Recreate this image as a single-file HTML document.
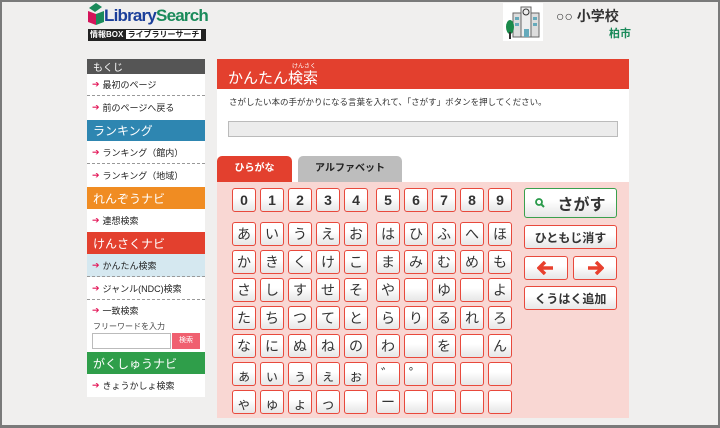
<!DOCTYPE html>
<html><head><meta charset="utf-8"><style>
*{margin:0;padding:0;box-sizing:border-box}
body{width:720px;height:428px;overflow:hidden;background:#f0efee;font-family:"Liberation Sans","Noto Sans CJK JP",sans-serif;position:relative;color:#222}
.frame{position:absolute;left:0;top:0;width:720px;height:428px;border:2px solid #7a7a7a;border-bottom-width:3px;pointer-events:none}
.a{position:absolute}
.side{left:87px;top:59px;width:118px;height:338px;background:#fff}
.hd{position:absolute;left:0;width:118px;color:#fff;font-size:12px;padding-left:6px;display:flex;align-items:center}
.it{position:absolute;left:0;width:118px;font-size:9px;padding-left:5px;display:flex;align-items:center;border-bottom:1px dashed #999}
.it:before{content:"➔";color:#e4195a;font-size:9px;margin-right:3px}
.key{position:absolute;width:24px;height:24px;border:1.5px solid #e8493c;border-radius:3px;background:linear-gradient(#fff 40%,#e6e6e6);font-size:14px;display:flex;align-items:center;justify-content:center;color:#333}
.key.sm{font-size:14px;padding-top:4px}
.btn{position:absolute;border:1.5px solid #e8493c;border-radius:3px;background:linear-gradient(#fff 40%,#e6e6e6);display:flex;align-items:center;justify-content:center;font-weight:bold;color:#333}
</style></head><body>
<div class="a" style="left:86px;top:3px;width:20px;height:24px">
<svg width="20" height="24"><polygon points="2,8 10,11 10,22 2,19" fill="#d4145a"/><polygon points="10,11 18,8 18,19 10,22" fill="#1a8a5a"/><polygon points="3,5 10,0 16,4 9,9" fill="#1a8a5a"/></svg></div>
<div class="a" style="left:104px;top:6px;font-size:17px;font-weight:bold;letter-spacing:-0.8px;color:#1b3f9a">Library<span style="color:#1a8a5a">Search</span></div>
<div class="a" style="left:88px;top:29px;width:118px;height:12px;background:#222;color:#fff;font-size:8px;font-weight:bold;line-height:12px;padding-left:2px">情報BOX <span style="background:#fff;color:#222;padding:0 2px">ライブラリーサーチ</span></div>
<div class="a" style="left:503px;top:3px;width:40px;height:38px;background:#fff">
<svg width="40" height="38"><rect x="10" y="10" width="26" height="24" fill="#ddd" stroke="#666"/><rect x="18" y="4" width="10" height="30" fill="#eee" stroke="#666"/><circle cx="23" cy="9" r="3" fill="none" stroke="#333"/><rect x="12" y="14" width="4" height="3" fill="#6ab"/><rect x="30" y="14" width="4" height="3" fill="#6ab"/><rect x="12" y="20" width="4" height="3" fill="#6ab"/><rect x="30" y="20" width="4" height="3" fill="#6ab"/><rect x="21" y="26" width="5" height="8" fill="#6ab"/><ellipse cx="7" cy="24" rx="4" ry="7" fill="#1a8a4a"/><rect x="6" y="29" width="2" height="7" fill="#333"/></svg></div>
<div class="a" style="left:556px;top:6px;font-size:14px;font-weight:bold;color:#333">○○ 小学校</div>
<div class="a" style="left:609px;top:25px;font-size:11px;font-weight:bold;color:#1a8a5a">柏市</div>
<div class="a side">
<div class="hd" style="top:0;height:15px;background:#555;font-size:10px">もくじ</div>
<div class="it" style="top:15px;height:22px">最初のページ</div>
<div class="it" style="top:37px;height:23px;border:0">前のページへ戻る</div>
<div class="hd" style="top:61px;height:21px;background:#2e86b1">ランキング</div>
<div class="it" style="top:82px;height:23px">ランキング（館内）</div>
<div class="it" style="top:105px;height:23px;border:0">ランキング（地域）</div>
<div class="hd" style="top:128px;height:22px;background:#f08c22">れんぞうナビ</div>
<div class="it" style="top:150px;height:23px;border:0">連想検索</div>
<div class="hd" style="top:173px;height:22px;background:#e3402e">けんさくナビ</div>
<div class="it" style="top:195px;height:23px;background:#d5e8f0">かんたん検索</div>
<div class="it" style="top:218px;height:23px">ジャンル(NDC)検索</div>
<div class="it" style="top:243px;height:16px;border:0">一致検索</div>
<div class="a" style="left:6px;top:262px;font-size:8px;color:#444">フリーワードを入力</div>
<div class="a" style="left:5px;top:274px;width:79px;height:16px;border:1px solid #bbb;background:#fff"></div>
<div class="a" style="left:85px;top:274px;width:28px;height:16px;background:#f06070;color:#fff;font-size:7px;text-align:center;line-height:16px">検索</div>
<div class="hd" style="top:293px;height:22px;background:#2f9e4a">がくしゅうナビ</div>
<div class="it" style="top:315px;height:23px;border:0">きょうかしょ検索</div>
</div>
<div class="a" style="left:217px;top:59px;width:412px;height:359px;background:#fff"></div>
<div class="a" style="left:217px;top:59px;width:412px;height:30px;background:#e3402e;color:#fff;font-size:15px;padding:8px 0 0 11px">かんたん<span style="position:relative">検索<span style="position:absolute;left:4px;top:-9px;font-size:6px;white-space:nowrap">けんさく</span></span></div>
<div class="a" style="left:229px;top:96px;font-size:8.5px;color:#333">さがしたい本の手がかりになる言葉を入れて、「さがす」ボタンを押してください。</div>
<div class="a" style="left:228px;top:121px;width:390px;height:16px;border:1px solid #bbb;background:#ececec"></div>
<div class="a" style="left:217px;top:156px;width:75px;height:27px;background:#e3402e;border-radius:5px 5px 0 0;color:#fff;font-size:10px;font-weight:bold;text-align:center;line-height:26px">ひらがな</div>
<div class="a" style="left:298px;top:156px;width:104px;height:27px;background:#bdbdbd;border-radius:5px 5px 0 0;color:#222;font-size:10px;font-weight:bold;text-align:center;line-height:26px">アルファベット</div>
<div class="a" style="left:217px;top:182px;width:412px;height:236px;background:#f9d7d3"></div>
<div id="keys"></div>
<div class="btn" style="left:524px;top:188px;width:93px;height:30px;border-color:#3aa04d;font-size:16px"><svg width="10" height="10" style="margin-right:12px"><circle cx="4" cy="4" r="3" fill="none" stroke="#2a9a4a" stroke-width="1.8"/><line x1="6" y1="6" x2="9" y2="9" stroke="#2a9a4a" stroke-width="2"/></svg>さがす</div>
<div class="btn" style="left:524px;top:225px;width:93px;height:24px;font-size:12px">ひともじ消す</div>
<div class="btn" style="left:524px;top:256px;width:44px;height:24px"><svg width="18" height="14"><path d="M2 7H16M8 1L2 7L8 13" fill="none" stroke="#e8402e" stroke-width="3.5"/></svg></div>
<div class="btn" style="left:573px;top:256px;width:44px;height:24px"><svg width="18" height="14"><path d="M2 7H16M10 1L16 7L10 13" fill="none" stroke="#e8402e" stroke-width="3.5"/></svg></div>
<div class="btn" style="left:524px;top:286px;width:93px;height:24px;font-size:12px">くうはく追加</div>
<script>
var rows=[["0","1","2","3","4","5","6","7","8","9"],["あ","い","う","え","お","は","ひ","ふ","へ","ほ"],["か","き","く","け","こ","ま","み","む","め","も"],["さ","し","す","せ","そ","や","","ゆ","","よ"],["た","ち","つ","て","と","ら","り","る","れ","ろ"],["な","に","ぬ","ね","の","わ","","を","","ん"],["ぁ","ぃ","ぅ","ぇ","ぉ","゛","゜","","",""],["ゃ","ゅ","ょ","っ","","ー","","","",""]];
var h="";
rows.forEach(function(r,i){var y=i==0?188:222+(i-1)*28;r.forEach(function(c,j){var x=(j<5?232:376)+(j%5)*28;var cl=(i>=6&&j<5)?"key sm":"key";var st=i==0?"font-weight:bold;":"";h+='<div class="'+cl+'" style="'+st+'left:'+x+'px;top:'+y+'px">'+c+'</div>';});});
document.getElementById("keys").innerHTML=h;
</script>
<div class="frame"></div>
</body></html>
